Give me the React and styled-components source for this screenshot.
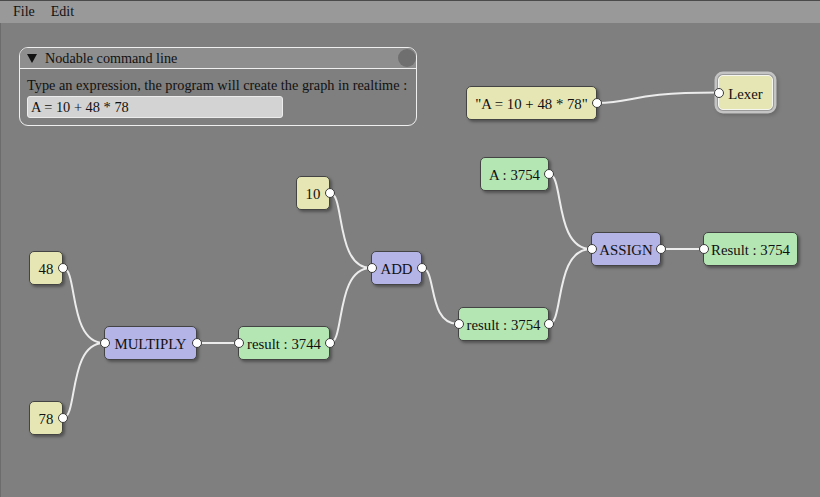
import React from "react";
import styled, { createGlobalStyle, css } from "styled-components";

const MENU_H = 23;
const SERIF = `"Liberation Serif", "Times New Roman", serif`;

const GlobalStyle = createGlobalStyle`
  html, body { margin: 0; padding: 0; background: #7f7f7f; }
  body { font-family: ${SERIF}; font-size: 14px; color: #111; }
`;

const Screen = styled.div`
  width: 820px;
  height: 497px;
  display: flex;
  flex-direction: column;
  overflow: hidden;
  background: #7f7f7f;
  font-family: ${SERIF};
`;

const MenuBar = styled.div`
  height: ${MENU_H - 1}px;
  flex: none;
  display: flex;
  align-items: center;
  gap: 16px;
  padding-left: 13px;
  background: #999999;
  border-top: 1px solid #4a4a4a;
`;

const MenuItem = styled.span`
  font-family: ${SERIF};
  font-size: 14px;
  line-height: 16px;
  color: #111;
`;

const Canvas = styled.div`
  position: relative;
  flex: 1;
  background: #7f7f7f;
  border-left: 1px solid #6c6c6c;
`;

const WireLayer = styled.svg`
  position: absolute;
  left: -1px;
  top: 0;
  width: 820px;
  height: 474px;
  pointer-events: none;
`;

const CommandWindow = styled.div`
  position: absolute;
  left: 18px;
  top: ${47 - MENU_H}px;
  width: 396px;
  border: 1.5px solid #efefef;
  border-radius: 9px;
  overflow: hidden;
  display: flex;
  flex-direction: column;
`;

const WindowHeader = styled.div`
  height: 20px;
  display: flex;
  align-items: center;
  gap: 8px;
  padding-left: 7px;
  background: #8e8e8e;
  border-bottom: 1.5px solid #efefef;
`;

const Triangle = styled.span`
  width: 0;
  height: 0;
  border-left: 5px solid transparent;
  border-right: 5px solid transparent;
  border-top: 9px solid #111;
`;

const HeaderTitle = styled.span`
  flex: 1;
  font-family: ${SERIF};
  font-size: 14.2px;
  line-height: 16px;
  white-space: nowrap;
`;

const CloseDot = styled.span`
  width: 18px;
  height: 18px;
  border-radius: 50%;
  background: #6f6f6f;
  align-self: flex-start;
  margin-top: 0.5px;
`;

const WindowBody = styled.div`
  display: flex;
  flex-direction: column;
  align-items: flex-start;
  gap: 3px;
  padding: 8px 7px 7px 7px;
`;

const BodyText = styled.span`
  font-family: ${SERIF};
  font-size: 14.3px;
  line-height: 16px;
  white-space: nowrap;
`;

const ExprInput = styled.div`
  box-sizing: border-box;
  width: 256px;
  height: 22px;
  padding: 0 3px;
  display: flex;
  align-items: center;
  background: #d3d3d3;
  border: 1px solid #ececec;
  border-radius: 3px;
  font-family: ${SERIF};
  font-size: 14.4px;
  white-space: nowrap;
`;

const palette = {
  value: "#e6e6b4",
  result: "#b4e6b4",
  op: "#b4b4e6",
};

const Node = styled.div`
  position: absolute;
  box-sizing: border-box;
  left: ${(p) => p.$x}px;
  top: ${(p) => p.$y - MENU_H}px;
  width: ${(p) => p.$w}px;
  height: ${(p) => p.$h}px;
  display: flex;
  align-items: center;
  justify-content: center;
  padding-top: 2px;
  background: ${(p) => palette[p.$kind]};
  border: 1px solid #444;
  border-radius: 5px;
  box-shadow: 2px 2px 3px rgba(0, 0, 0, 0.35);
  font-family: ${SERIF};
  font-size: 14.8px;
  line-height: 16px;
  white-space: nowrap;
  color: #111;
  ${(p) =>
    p.$selected &&
    css`
      border: 1px solid #f6f6f0;
      box-shadow: 0 0 0 1px #9a9a9a, 0 0 0 3.5px #c4c4c4, 2px 2px 4px 3px rgba(0, 0, 0, 0.2);
    `}
`;

const Pin = styled.span`
  position: absolute;
  top: 50%;
  width: 10px;
  height: 10px;
  box-sizing: border-box;
  border-radius: 50%;
  background: #ffffff;
  border: 1px solid #3a3a3a;
  transform: translate(-50%, -50%);
  ${(p) => (p.$side === "left" ? "left: -0.5px;" : "left: calc(100% + 0.5px);")}
`;

const nodes = [
  { id: "str", label: '"A = 10 + 48 * 78"', kind: "value", x: 466, y: 86, w: 131, h: 34, out: true },
  { id: "lexer", label: "Lexer", kind: "value", x: 718, y: 75, w: 55, h: 35, inp: true, selected: true },
  { id: "10", label: "10", kind: "value", x: 296, y: 176, w: 34, h: 34, out: true },
  { id: "add", label: "ADD", kind: "op", x: 371, y: 251, w: 51, h: 34, inp: true, out: true },
  { id: "48", label: "48", kind: "value", x: 29, y: 251, w: 34, h: 34, out: true },
  { id: "mul", label: "MULTIPLY", kind: "op", x: 104, y: 326, w: 93, h: 34, inp: true, out: true },
  { id: "r3744", label: "result : 3744", kind: "result", x: 238, y: 326, w: 92, h: 34, inp: true, out: true },
  { id: "78", label: "78", kind: "value", x: 29, y: 401, w: 34, h: 34, out: true },
  { id: "a", label: "A : 3754", kind: "result", x: 480, y: 157, w: 69, h: 34, out: true },
  { id: "assign", label: "ASSIGN", kind: "op", x: 591, y: 232, w: 70, h: 34, inp: true, out: true },
  { id: "res", label: "Result : 3754", kind: "result", x: 703, y: 232, w: 95, h: 34, inp: true },
  { id: "r3754", label: "result : 3754", kind: "result", x: 458, y: 307, w: 91, h: 34, inp: true, out: true },
];

const byId = Object.fromEntries(nodes.map((n) => [n.id, n]));
const outPos = (n) => [n.x + n.w, n.y + n.h / 2];
const inPos = (n) => [n.x, n.y + n.h / 2];

const wires = [
  { from: "str", to: "lexer", a: 40, b: 30 },
  { from: "10", to: "add" },
  { from: "r3744", to: "add" },
  { from: "48", to: "mul" },
  { from: "78", to: "mul" },
  { from: "mul", to: "r3744" },
  { from: "add", to: "r3754" },
  { from: "a", to: "assign" },
  { from: "r3754", to: "assign" },
  { from: "assign", to: "res" },
];

function wirePath({ from, to, a = 15, b = 5 }) {
  const [x0, y0r] = outPos(byId[from]);
  const [x3, y3r] = inPos(byId[to]);
  const y0 = y0r - MENU_H;
  const y3 = y3r - MENU_H;
  if (Math.abs(y0 - y3) < 1) return `M ${x0} ${y0} L ${x3} ${y3}`;
  return `M ${x0} ${y0} C ${x0 + a} ${y0}, ${x0 + b} ${y3}, ${x3} ${y3}`;
}

export default function App() {
  return (
    <>
      <GlobalStyle />
      <Screen>
        <MenuBar>
          <MenuItem>File</MenuItem>
          <MenuItem>Edit</MenuItem>
        </MenuBar>
        <Canvas>
          <WireLayer viewBox="0 0 820 474">
            {wires.map((w, i) => (
              <path
                key={i}
                d={wirePath(w)}
                fill="none"
                stroke="#ececec"
                strokeWidth="2"
                strokeLinecap="round"
              />
            ))}
          </WireLayer>
          <CommandWindow>
            <WindowHeader>
              <Triangle />
              <HeaderTitle>Nodable command line</HeaderTitle>
              <CloseDot />
            </WindowHeader>
            <WindowBody>
              <BodyText>Type an expression, the program will create the graph in realtime :</BodyText>
              <ExprInput>A = 10 + 48 * 78</ExprInput>
            </WindowBody>
          </CommandWindow>
          {nodes.map((n) => (
            <Node
              key={n.id}
              $x={n.x - 1}
              $y={n.y}
              $w={n.w}
              $h={n.h}
              $kind={n.kind}
              $selected={n.selected}
            >
              {n.label}
              {n.inp && <Pin $side="left" />}
              {n.out && <Pin $side="right" />}
            </Node>
          ))}
        </Canvas>
      </Screen>
    </>
  );
}
